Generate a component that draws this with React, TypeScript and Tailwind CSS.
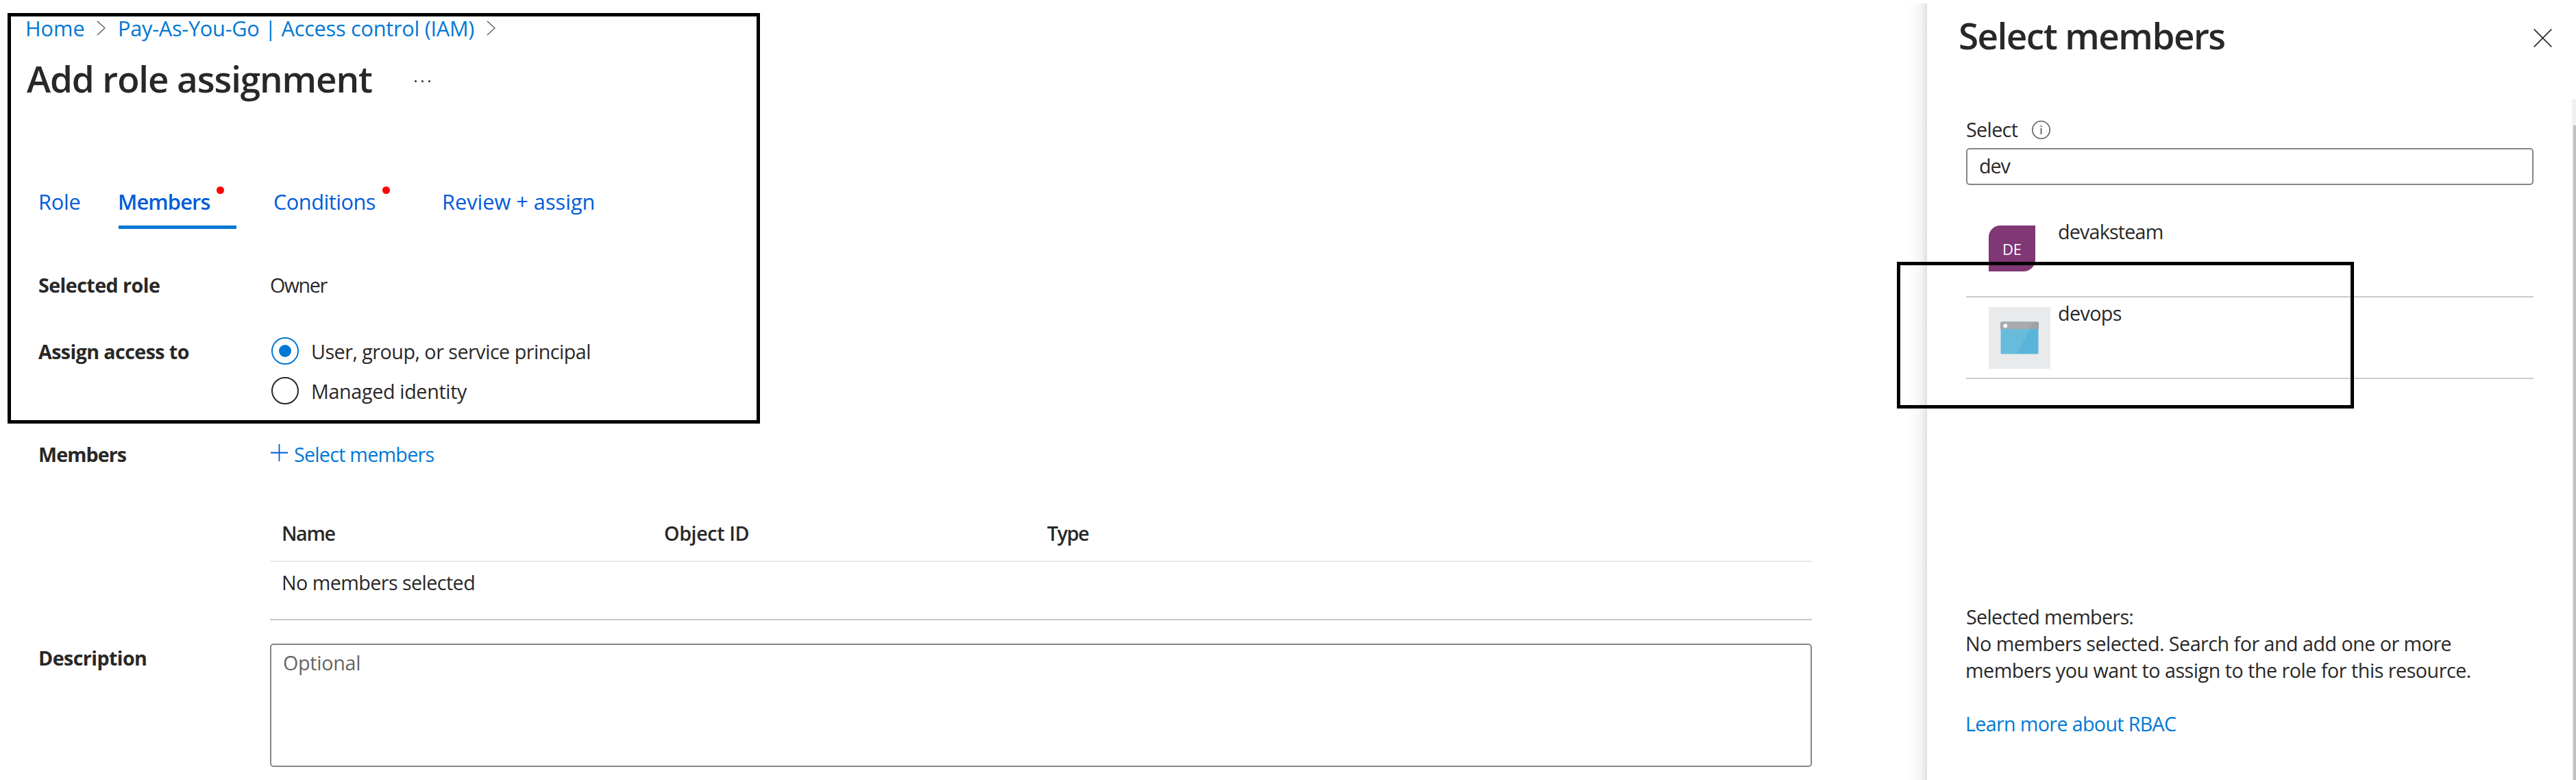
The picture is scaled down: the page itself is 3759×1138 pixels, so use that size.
import React from 'react';

const BODY = "text-[28.7px] leading-[39px]";

function Chevron() {
  return (
    <svg className="h-[22px] w-[13px] shrink-0" viewBox="0 0 13 22" fill="none" stroke="#605e5c" strokeWidth="1.4">
      <path d="M0.8 0.8 L12 11 L0.8 21.2" />
    </svg>
  );
}

function Radio({ checked = false }: { checked?: boolean }) {
  return (
    <span
      className={
        checked
          ? "flex size-10 items-center justify-center rounded-full border-2 border-[#0078d4]"
          : "flex size-10 items-center justify-center rounded-full border-2 border-[#292827]"
      }
    >
      {checked && <span className="size-[18px] rounded-full bg-[#0078d4]" />}
    </span>
  );
}

function Breadcrumb() {
  return (
    <nav className="flex h-[42px] items-center pl-[37px] text-[30.75px] leading-[42px] text-[#0078d4]">
      <a className="w-[104px] tracking-[-0.08px]">Home</a>
      <Chevron />
      <a className="ml-[18px] w-[538px] tracking-[-0.28px]">Pay-As-You-Go | Access control (IAM)</a>
      <Chevron />
    </nav>
  );
}

function Tabs() {
  return (
    <div className="mt-[122px] flex h-[61px] pl-[55px] text-[30.75px] leading-[42px] text-[#015cda]">
      <a className="w-[118px] pl-px tracking-[-0.21px]">Role</a>
      <a className="relative w-[172px] border-b-[5px] border-[#0078d4] font-semibold">
        <span className="-ml-px tracking-[-0.85px]">Members</span>
        <i className="absolute -top-px left-[143px] size-[11px] rounded-full bg-[#ff0000]" />
      </a>
      <a className="relative ml-[54px] w-[246px] tracking-[-0.51px]">
        Conditions
        <i className="absolute -top-px left-[159px] size-[11px] rounded-full bg-[#ff0000]" />
      </a>
      <a className="tracking-[-0.02px]">Review + assign</a>
    </div>
  );
}

function MainBlade() {
  return (
    <main className="w-[2780px] shrink-0 pt-5">
      <Breadcrumb />
      <div className="mt-4 flex h-[73px] items-center pl-[39px]">
        <h1 className="w-[566px] text-[53px] font-semibold leading-[73px] tracking-[-1.11px]">
          Add role assignment
        </h1>
        <div className="mt-[7px] flex gap-[7px]">
          <i className="size-[3px] rounded-full bg-[#292827]" />
          <i className="size-[3px] rounded-full bg-[#292827]" />
          <i className="size-[3px] rounded-full bg-[#292827]" />
        </div>
      </div>
      <Tabs />

      <div className="pl-14">
        <div className="mt-[62px] flex">
          <b className="w-[338px] tracking-[-0.57px]">Selected role</b>
          <span className="tracking-[-1.46px]">Owner</span>
        </div>

        <div className="mt-[57px] flex">
          <b className="w-[340px] pt-px tracking-[-0.61px]">Assign access to</b>
          <div className="flex flex-col gap-[18px]">
            <label className="flex items-end gap-[18px]">
              <Radio checked />
              <span className="tracking-[-0.5px]">User, group, or service principal</span>
            </label>
            <label className="flex items-end gap-[18px]">
              <Radio />
              <span className="tracking-[-0.34px]">Managed identity</span>
            </label>
          </div>
        </div>

        <div className="mt-[53px] flex">
          <b className="w-[339px] tracking-[-0.92px]">Members</b>
          <a className="flex text-[#0078d4]">
            <svg className="mt-[5px] h-[25px] w-[25px]" viewBox="0 0 25 25" stroke="#015cda" strokeWidth="1.8">
              <path d="M12.5 0 V25 M0 12.5 H25" />
            </svg>
            <span className="ml-[9px] tracking-[-0.75px]">Select members</span>
          </a>
        </div>

        <div className="ml-[338px] mt-[76px] w-[2250px]">
          <div className="flex border-b-2 border-[#eaeaea] pb-[21px] pl-[17px] font-semibold">
            <span className="w-[558px] tracking-[-1.36px]">Name</span>
            <span className="w-[559px] tracking-[-0.41px]">Object ID</span>
            <span className="tracking-[-1.37px]">Type</span>
          </div>
          <div className="border-b-2 border-[#c8c8c8] pb-[34px] pl-[17px] pt-2.5 tracking-[-0.56px]">No members selected</div>
        </div>

        <div className="mt-[34px] flex">
          <b className="w-[338px] pt-px tracking-[-0.6px]">Description</b>
          <textarea
            className="block h-[180px] w-[2250px] resize-none rounded-[5px] border-2 border-[#868686] px-[17px] py-1.5 tracking-[-0.27px] placeholder:text-[#666666]"
            placeholder="Optional"
          />
        </div>
      </div>
    </main>
  );
}

function WindowIcon() {
  return (
    <svg className="size-[90px]" viewBox="0 0 90 90">
      <rect width="90" height="90" fill="#e8eaec" />
      <rect x="17" y="21" width="56" height="48" rx="2.5" fill="#a9d3e6" />
      <path d="M18 32 H72 V66.5 Q72 68 70.5 68 H19.5 Q18 68 18 66.5 Z" fill="#59b4d9" />
      <path d="M17 32 V23.5 Q17 21.5 19.5 21.5 H70.5 Q73 21.5 73 23.5 V32 Z" fill="#a0a1a2" />
      <path d="M18 32 V23.5 Q18 22 19.5 22 H65 L41.5 68 H19.5 Q18 68 18 66.5 Z" fill="#ffffff" opacity="0.1" />
      <circle cx="24.3" cy="27.3" r="2.9" fill="#ffffff" />
    </svg>
  );
}

function MemberPanel() {
  return (
    <aside className="flex h-[1133px] w-[947px] flex-col bg-white">
      <header className="flex h-[140px] shrink-0 items-start justify-between pl-[46px] pr-[35px] pt-2.5">
        <h2 className="text-[53px] font-semibold leading-[73px] tracking-[-1.53px]">Select members</h2>
        <svg className="mt-[27px] size-[27px]" viewBox="0 0 27 27" stroke="#323130" strokeWidth="1.8">
          <path d="M0.7 0.7 L26.3 26.3 M26.3 0.7 L0.7 26.3" />
        </svg>
      </header>

      <div className="flex min-h-0 flex-1">
        <div className="w-[941px] pl-[57px] pt-6">
          <label className="flex h-[39px] items-start">
            <span className="w-24 tracking-[-0.65px]">Select</span>
            <svg className="mt-[7px] size-[27px]" viewBox="0 0 27 27" fill="none" stroke="#605e5c">
              <circle cx="13.5" cy="13.5" r="12.7" strokeWidth="1.6" />
              <path d="M13.5 11 V19.8" strokeWidth="1.8" />
              <path d="M13.5 7.2 V9.2" strokeWidth="2" />
            </svg>
          </label>
          <input
            className="mt-2 block h-[54px] w-[828px] rounded-[5px] border-2 border-[#868686] px-[17px] pb-[3px] tracking-[-1.08px]"
            defaultValue="dev"
          />

          <ul className="mt-[45px] w-[828px]">
            <li className="flex h-[119px] border-b-2 border-[#cccccc] pl-[33px]">
              <div className="mt-3.5 flex h-[67px] w-[68px] items-center justify-center rounded-br-[17px] rounded-tl-[17px] bg-[#803776] pt-px text-[22px] leading-[30px] text-white">
                DE
              </div>
              <span className="ml-[33px] mt-[3px] tracking-[-0.81px]">devaksteam</span>
            </li>
            <li className="flex h-[119px] border-b-2 border-[#cccccc] pl-[33px]">
              <div className="mt-3.5 size-[90px]">
                <WindowIcon />
              </div>
              <span className="ml-[11px] mt-[3px] tracking-[-0.62px]">devops</span>
            </li>
          </ul>

          <div className="-ml-px mt-[327px] whitespace-nowrap">
            <p className="pl-px tracking-[-0.7px]">Selected members:</p>
            <p className="tracking-[-0.52px]">No members selected. Search for and add one or more</p>
            <p className="tracking-[-0.49px]">members you want to assign to the role for this resource.</p>
            <a className="mt-[39px] block tracking-[-0.66px] text-[#0078d4]">Learn more about RBAC</a>
          </div>
        </div>
        <div className="flex-1 bg-[#f0f0f0] pl-0.5 pt-[38px]">
          <div className="h-full bg-[#c1c1c1]" />
        </div>
      </div>
    </aside>
  );
}

export default function App() {
  return (
    <div className={`relative flex h-[1138px] w-[3759px] overflow-hidden bg-white font-['Open_Sans',sans-serif] text-[#292827] ${BODY}`}>
      <MainBlade />
      <div className="mt-[5px] w-8 shrink-0 bg-[linear-gradient(to_right,#ffffff_0%,#fcfcfc_35%,#f8f8f8_60%,#efefef_82%,#dedede_100%)]" />
      <div className="shrink-0 pt-[5px]">
        <MemberPanel />
      </div>

      {/* Highlight frames laid over the form and the second search result */}
      <div className="absolute left-[11px] top-[19px] h-[599px] w-[1098px] border-[5px] border-black" />
      <div className="absolute left-[2768px] top-[382px] h-[214px] w-[667px] border-[5px] border-black" />
    </div>
  );
}
